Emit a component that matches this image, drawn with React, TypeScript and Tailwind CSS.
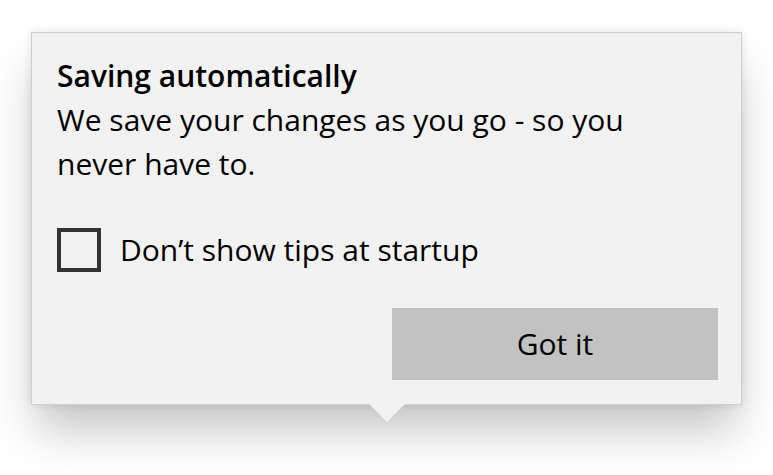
import { useState } from "react";

export default function App() {
  const [hideTips, setHideTips] = useState(false);

  return (
    <div className="min-h-[475px] bg-white pt-[32px] pl-[31px] font-['Open_Sans',sans-serif] text-black">
      <div className="relative flex h-[373px] w-[711px] flex-col border border-[#cfcfcf] bg-[#f2f2f2] pt-[21px] pr-[23px] pb-[24px] pl-[25px] shadow-[0_0_8px_rgba(0,0,0,0.1),0_30px_44px_-6px_rgba(0,0,0,0.24)]">
        <h1 className="text-[30px] leading-[44px] font-semibold">Saving automatically</h1>
        <p className="max-w-[600px] text-[30px] leading-[44px]">
          We save your changes as you go - so you never have to.
        </p>

        {/* Checkbox row */}
        <label className="mt-[42px] flex cursor-pointer items-center gap-[19px]">
          <button
            type="button"
            onClick={() => setHideTips(!hideTips)}
            className="flex h-[44px] w-[44px] items-center justify-center border-4 border-[#333333] bg-transparent"
          >
            {hideTips && (
              <svg viewBox="0 0 24 24" className="h-7 w-7" fill="none" stroke="#333" strokeWidth="3">
                <path d="M4 12l5 5L20 6" />
              </svg>
            )}
          </button>
          <span className="text-[30px] leading-[44px]">Don’t show tips at startup</span>
        </label>

        <div className="mt-auto flex justify-end">
          <button className="h-[72px] w-[326px] bg-[#c2c2c2] text-[30px] leading-[44px] text-black">
            Got it
          </button>
        </div>

        {/* Tail */}
        <svg
          className="absolute top-full left-[337px] h-[19px] w-[36px]"
          viewBox="0 0 36 19"
        >
          <polygon points="0,0 36,0 18,18" fill="#f2f2f2" />
        </svg>
      </div>
    </div>
  );
}
